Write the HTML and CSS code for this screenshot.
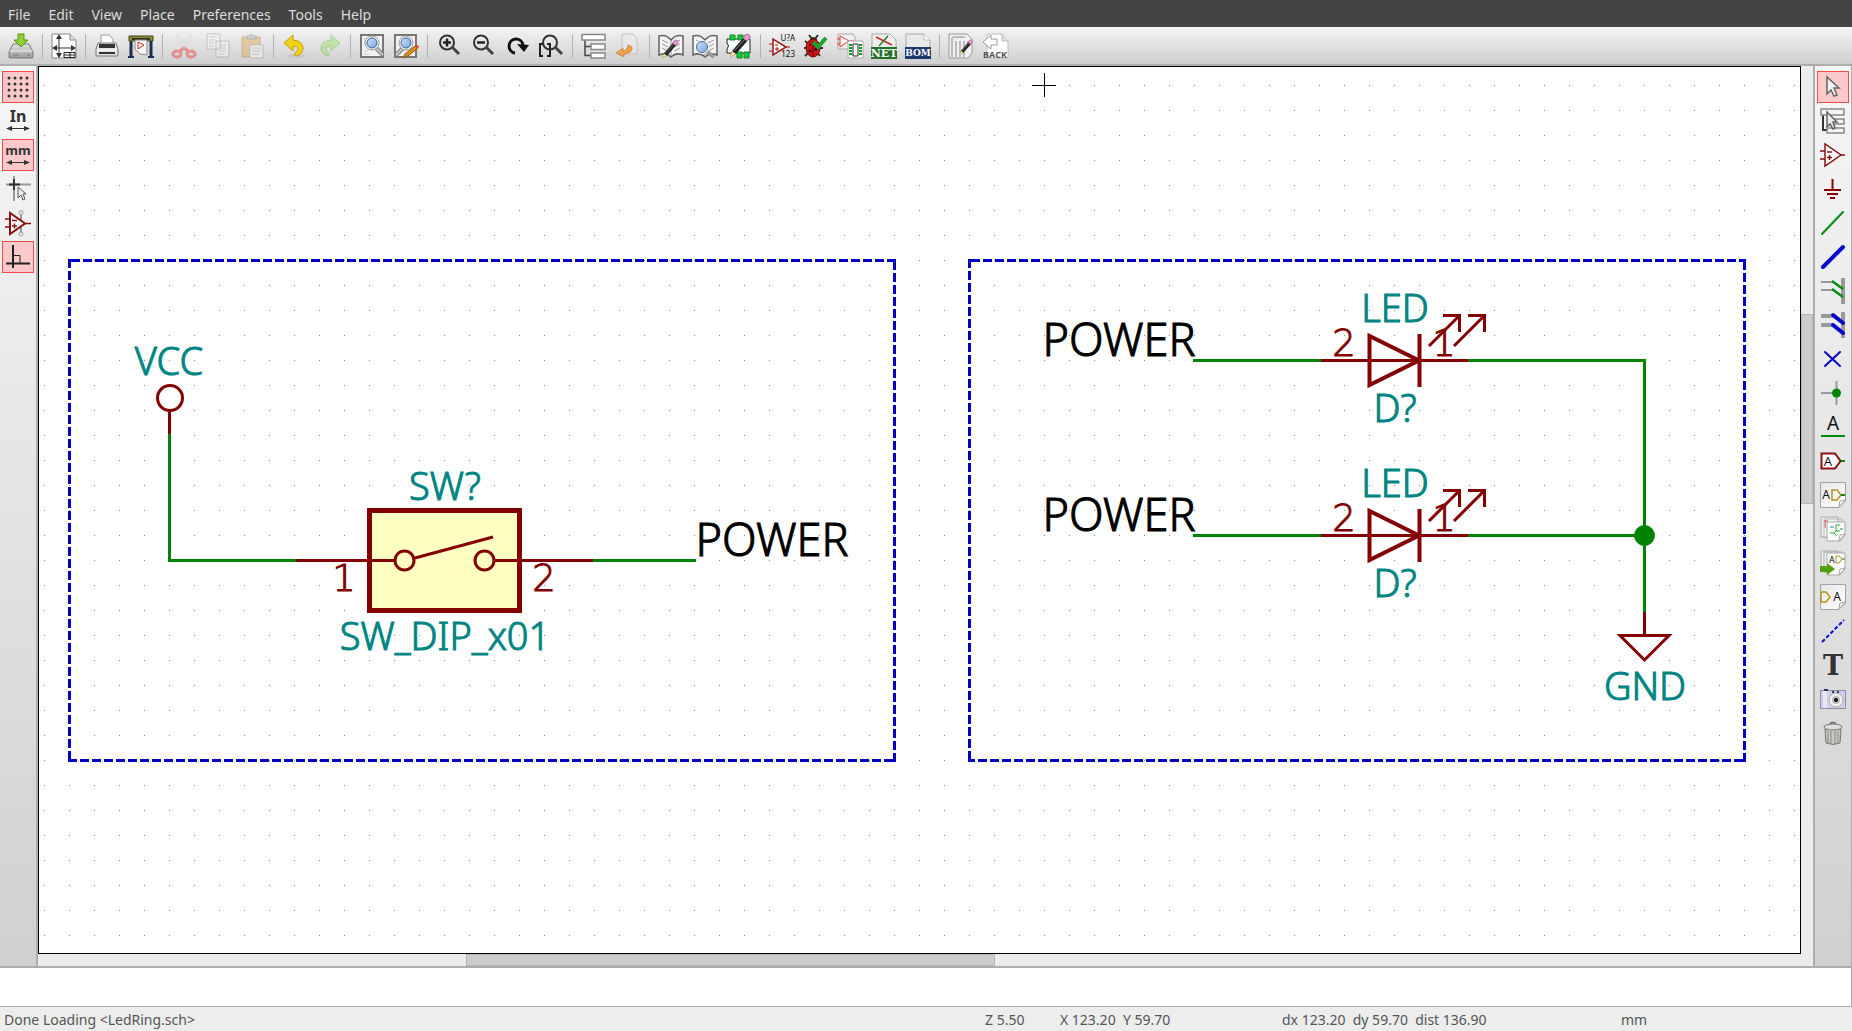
FILE: index.html
```html
<!DOCTYPE html>
<html lang="en">
<head>
<meta charset="utf-8">
<title>Eeschema - LedRing.sch</title>
<link rel="stylesheet" href="styles.css">
</head>
<body>
<svg class="defs" aria-hidden="true">
  <defs>
    <linearGradient id="sheet" x1="0" y1="0" x2="1" y2="1"><stop offset="0" stop-color="#e6e6e6"/><stop offset="1" stop-color="#fff"/></linearGradient>
    <linearGradient id="metal" x1="0" y1="0" x2="0" y2="1"><stop offset="0" stop-color="#e4e4e4"/><stop offset="1" stop-color="#9a9a9a"/></linearGradient>
    <linearGradient id="lens" x1="0" y1="0" x2="1" y2="1"><stop offset="0" stop-color="#d5e4f7"/><stop offset="1" stop-color="#6fa0dc"/></linearGradient>
    <g id="page"><path d="M.5 .5H25.500V19L19 25.500H.5Z" fill="url(#sheet)" stroke="#a3a3a3"/><path d="M25 18L19 25L20 19Z" fill="#fff" stroke="#a3a3a3"/></g>
    <g id="pencil"><path d="M4 24L6 18L19 3L23 6L10 21Z" fill="#222"/><path d="M8 18L20 5" stroke="#777"/><path d="M4 24L6 18L10 21Z" fill="#f2e08a"/><path d="M17 5L19 2Q22 0 24 3Q25 5 21 8Z" fill="#e79ad0" stroke="#a8669a"/></g>
    <g id="book"><path d="M1 3Q8 1 13 7Q18 1 25 3V22Q18 19 13 24Q8 19 1 22Z" fill="#f4f4f4" stroke="#666" stroke-width="1.500"/><path d="M13 7V23M4 7L10 10M4 11L10 14M4 15L10 18M16 10L22 7M16 14L22 11M16 18L22 15" stroke="#999" fill="none"/></g>
    <g id="diode">
      <path d="M1321 360.500H1468" stroke-width="3"/>
      <path d="M1369.500 336V385L1419 360.500Z" stroke-width="4"/>
      <path d="M1419.500 334V387" stroke-width="4"/>
      <path d="M1429 346L1459 316M1443 315.500H1461M1459.500 314V332M1454 346L1484 316M1468 315.500H1486M1484.500 314V332" stroke-width="3"/>
    </g>
  </defs>
</svg>

<nav class="menubar" aria-label="Menu">
  <button>File</button><button>Edit</button><button>View</button><button>Place</button><button>Preferences</button><button>Tools</button><button>Help</button>
</nav>

<div class="toolbar" role="toolbar" aria-label="Main">
  <button aria-label="Save"><svg viewBox="0 0 26 26"><path d="M5 11H21L25 19V24Q25 25 24 25H2Q1 25 1 24V19Z" fill="url(#metal)" stroke="#7a7a7a"/><path d="M2 18H24" stroke="#eee"/><path d="M5 22H11M19 22H22" stroke="#777"/><path d="M10 1H16V7H20L13 14L6 7H10Z" fill="#8fd03a" stroke="#4e9a06"/></svg></button>
  <span class="sep"></span>
  <button aria-label="Page settings"><svg viewBox="0 0 26 26"><path d="M1 1H19L25 7V25H1Z" fill="#fff" stroke="#888"/><path d="M19 1V7H25" fill="#ddd" stroke="#888"/><path d="M8 3V24M2 15H24" stroke="#333"/><path d="M8 1L5 6H11ZM8 25L5 20H11ZM1 15L6 12V18ZM25 15L20 12V18Z" fill="#333"/><path d="M13 19.500H24V24.500H13ZM13 22H24M19 20V24" fill="#fff" stroke="#222"/></svg></button>
  <span class="sep"></span>
  <button aria-label="Print"><svg viewBox="0 0 26 26"><path d="M7 11V2H15L19 6V11Z" fill="#fff" stroke="#999"/><path d="M4 10H22L24 16V22Q24 23 23 23H3Q2 23 2 22V16Z" fill="#e3e3e3" stroke="#777"/><path d="M5 11H21V15H5Z" fill="#333"/><path d="M3 17H23" stroke="#fff"/><path d="M5 20H21" stroke="#333" stroke-width="2"/></svg></button>
  <button aria-label="Plot"><svg viewBox="0 0 26 26"><path d="M3 8V25M23 8V25" stroke="#1c2f52" stroke-width="3"/><path d="M0 24H6M20 24H26" stroke="#1c2f52" stroke-width="2"/><path d="M1 3H25V8H1Z" fill="#8b8b3c" stroke="#45451c"/><path d="M4 6H22" stroke="#333318" stroke-width="2"/><path d="M7 7H19V22L12 21L7 16Z" fill="#f5f5f5" stroke="#888"/><path d="M10 9V16L16 12Z" fill="none" stroke="#b33"/></svg></button>
  <span class="sep"></span>
  <button class="off" aria-label="Cut" disabled><svg viewBox="0 0 26 26"><path d="M6 1L17 19M20 1L9 19" stroke="#aaa" stroke-width="3"/><path d="M6 1L17 19M20 1L9 19" stroke="#eee" stroke-width="2"/><g fill="none" stroke="#e22" stroke-width="3"><ellipse cx="6" cy="21" rx="4" ry="3"/><ellipse cx="20" cy="21" rx="4" ry="3"/><path d="M9 18L13 15L17 18"/></g></svg></button>
  <button class="off" aria-label="Copy" disabled><svg viewBox="0 0 26 26"><path d="M2 1H15V16H2ZM11 8H24V24H11Z" fill="#fff" stroke="#888"/><path d="M4 4H12M4 7H10M4 10H9M4 13H9M14 12H21M14 15H21M14 18H21M14 21H19" stroke="#999"/></svg></button>
  <button class="off" aria-label="Paste" disabled><svg viewBox="0 0 26 26"><path d="M3 4H21V24H3Z" fill="#e0a040" stroke="#a06a20"/><path d="M8 6V3H10Q12-1 14 3H17V6Z" fill="#aaa" stroke="#666"/><path d="M11 12H24V25H11Z" fill="#fff" stroke="#888"/><path d="M13 15H22M13 18H22M13 21H20" stroke="#888"/></svg></button>
  <span class="sep"></span>
  <button aria-label="Undo"><svg viewBox="0 0 26 26"><ellipse cx="14" cy="23" rx="9" ry="2" fill="#c8c8c8"/><path d="M2 10L11 2V7Q21 8 21 15Q21 21 14 23Q12 23 13 20Q17 18 16 15Q15 13 11 13V18Z" fill="#f3d21c" stroke="#c4a000"/></svg></button>
  <button class="off" aria-label="Redo" disabled><svg viewBox="0 0 26 26"><path d="M24 10L15 2V7Q5 8 5 15Q5 21 12 23Q14 23 13 20Q9 18 10 15Q11 13 15 13V18Z" fill="#8ae255" stroke="#5cae2c"/></svg></button>
  <span class="sep"></span>
  <button aria-label="Find"><svg viewBox="0 0 26 26"><path d="M2 2H24V24H2Z" fill="#f2f2f2" stroke="#777" stroke-width="2"/><path d="M5 18H9M5 21H10M4 6H7" stroke="#ccc"/><path d="M17 15L24 22" stroke="#777" stroke-width="4"/><path d="M17 15L24 22" stroke="#ccc" stroke-width="2"/><circle cx="13" cy="10" r="7" fill="#f5f5f5" stroke="#999"/><circle cx="13" cy="10" r="5" fill="url(#lens)" stroke="#3465a4"/></svg></button>
  <button aria-label="Find and replace"><svg viewBox="0 0 26 26"><path d="M2 2H23V24H2Z" fill="#f2f2f2" stroke="#777" stroke-width="2"/><path d="M10 15L3 22" stroke="#777" stroke-width="4"/><path d="M10 15L3 22" stroke="#ccc" stroke-width="2"/><circle cx="13" cy="10" r="7" fill="#f5f5f5" stroke="#999"/><circle cx="13" cy="10" r="5" fill="url(#lens)" stroke="#3465a4"/><path d="M10 25L12 21L22 13L25 15L15 23Z" fill="#e08a1e" stroke="#8f5902"/><path d="M22 13L25 15L26 13L24 12Z" fill="#e33"/></svg></button>
  <span class="sep"></span>
  <button aria-label="Zoom in"><svg viewBox="0 0 26 26"><circle cx="11" cy="9.500" r="7" fill="none" stroke="#333" stroke-width="2"/><path d="M16 14L23 21" stroke="#444" stroke-width="3"/><path d="M7 9.500H15M11 5.500V13.500" stroke="#222" stroke-width="2.500"/></svg></button>
  <button aria-label="Zoom out"><svg viewBox="0 0 26 26"><circle cx="11" cy="9.500" r="7" fill="none" stroke="#333" stroke-width="2"/><path d="M16 14L23 21" stroke="#444" stroke-width="3"/><path d="M7 9.500H15" stroke="#222" stroke-width="2.500"/></svg></button>
  <button aria-label="Redraw view"><svg viewBox="0 0 26 26"><path d="M11 20A7 7 0 1 1 19 12" fill="none" stroke="#111" stroke-width="3"/><path d="M13 11L25 12L20 19Z" fill="#111"/></svg></button>
  <button aria-label="Zoom to fit"><svg viewBox="0 0 26 26"><circle cx="12" cy="9.500" r="7" fill="none" stroke="#333" stroke-width="2"/><path d="M17 14L24 21" stroke="#444" stroke-width="3"/><path d="M5 11H2V23H5M9 11H12V23H9" fill="none" stroke="#222" stroke-width="2"/></svg></button>
  <span class="sep"></span>
  <button aria-label="Hierarchy navigator"><svg viewBox="0 0 26 26"><path d="M4 7V22.500H10M4 13.500H10" fill="none" stroke="#444" stroke-width="1.500"/><path d="M1 1.500H24V7H1ZM10 11H24V16.500H10ZM10 20H24V25H10Z" fill="#fff" stroke="#888" stroke-width="1.500"/></svg></button>
  <button class="dim" aria-label="Leave sheet" disabled><svg viewBox="0 0 26 26"><path d="M7 1H18L22 5V21H7Z" fill="#e9e9e9" stroke="#b5b5b5"/><path d="M17 14Q18 20 9 21V24L1 20L8 15V18Q13 17 13 12Z" fill="#f58a14" stroke="#ce6a00"/></svg></button>
  <span class="sep"></span>
  <button aria-label="Library editor"><svg viewBox="0 0 26 26"><use href="#book"/><g transform="translate(1 6) scale(.8)"><use href="#pencil"/></g></svg></button>
  <button aria-label="Library browser"><svg viewBox="0 0 26 26"><use href="#book"/><path d="M14 18L22 24" stroke="#999" stroke-width="4"/><circle cx="10" cy="14" r="6" fill="url(#lens)" stroke="#f4f4f4" stroke-width="2"/><circle cx="10" cy="14" r="5.500" fill="none" stroke="#3465a4"/></svg></button>
  <button aria-label="Footprint editor"><svg viewBox="0 0 26 26"><path d="M1 6H24V20H1V16Q4 13 1 10Z" fill="#fff" stroke="#222"/><path d="M4 2H9V7H4ZM12 2H17V7H12ZM11 19H16V25H11ZM18 19H23V25H18Z" fill="#12c93a" stroke="#0a8a22"/><use href="#pencil"/></svg></button>
  <span class="sep"></span>
  <button aria-label="Annotate schematic"><svg viewBox="0 0 26 26"><path d="M4 6V22L17 14Z" fill="#fff" stroke="#a01818" stroke-width="1.500"/><path d="M0 11H4M0 18H4M17 14H21M6 12H9M6 16H10M8 14V18" stroke="#a01818"/><text x="26" y="8" class="t8">U?A</text><text x="26" y="24" class="t8">123</text></svg></button>
  <button aria-label="Electrical rules check"><svg viewBox="0 0 26 26"><path d="M6 2L9 6M15 2L12 6M2 8L6 11M1 15H5M2 23L6 19M17 23L14 19M16 15H20" stroke="#333" stroke-width="2"/><path d="M7 6Q10 2 14 6V9H7Z" fill="#333"/><ellipse cx="10" cy="15" rx="7" ry="9" fill="#cf1414" stroke="#700"/><path d="M10 8V23" stroke="#500"/><circle cx="7" cy="12" r="1" fill="#200"/><circle cx="13" cy="16" r="1.500" fill="#200"/><circle cx="7" cy="18" r="1.500" fill="#200"/><path d="M10 9L15 14L23 5" fill="none" stroke="#18a030" stroke-width="4"/></svg></button>
  <button aria-label="Assign footprints"><svg viewBox="0 0 26 26"><path d="M1 1H16L18 4V16H1Z" fill="#eee" stroke="#aaa"/><path d="M3 3V14L12 8ZM0 6H3M0 11H3M12 8H17" fill="#fff" stroke="#d33"/><path d="M11 8H26V25H11Z" fill="#fff" stroke="#aaa"/><path d="M16 11H21V23H16Z" fill="#fff" stroke="#222"/><path d="M13.500 11V23M23.500 11V23" stroke="#0a9a20" stroke-width="3" stroke-dasharray="2 1"/></svg></button>
  <button aria-label="Generate netlist"><svg viewBox="0 0 26 26"><path d="M1 1H19L25 7V25H1Z" fill="#eee" stroke="#aaa"/><path d="M5 4L21 12" stroke="#c22" stroke-width="1.500"/><path d="M17 3L8 13" stroke="#2a7a2a" stroke-width="1.500"/><path d="M0 14H26V26H0Z" fill="#24702a"/><text x="13" y="24" class="bar">NET</text></svg></button>
  <button aria-label="Generate bill of materials"><svg viewBox="0 0 26 26"><path d="M1 1H19L25 7V25H1Z" fill="#e9ebe9" stroke="#aaa"/><path d="M19 1V7H25" fill="#fff" stroke="#bbb"/><path d="M0 14H26V26H0Z" fill="#20386c"/><text x="13" y="23" class="bar bom">BOM</text></svg></button>
  <span class="sep"></span>
  <button aria-label="Run Pcbnew"><svg viewBox="0 0 26 26"><path d="M1 1H19L24 6V20L20 25H1Z" fill="#f1f1f1" stroke="#999"/><path d="M4 24V6Q4 4 7 4H17M8 24V8M12 24V8M16 24V8M20 8V12" fill="none" stroke="#bbb" stroke-width="2"/><g transform="translate(9 6) scale(.65)"><use href="#pencil"/></g></svg></button>
  <button aria-label="Import footprint associations"><svg viewBox="0 0 26 26"><path d="M5 1H20L26 8V25H5Z" fill="#fff" stroke="#bbb"/><path d="M20 1V8H26" fill="#ddd" stroke="#bbb"/><path d="M1 9L9 2V6H15V12H9V16Z" fill="#fff" stroke="#999"/><text x="13" y="25" class="back">BACK</text></svg></button>
</div>

<main class="work">
  <div class="side left" role="toolbar" aria-label="Options">
    <button class="on" aria-label="Show grid"><svg viewBox="0 0 26 26"><path d="M4 4H24M4 10H24M4 16H24M4 22H24" stroke="#333" stroke-width="3" stroke-linecap="round" stroke-dasharray="0 6"/></svg></button>
    <button aria-label="Inches"><svg viewBox="0 0 26 26"><text x="13" y="14" class="unit">In</text><path d="M4 20.500H22" stroke="#333"/><path d="M1 20.500L7 18V23ZM25 20.500L19 18V23Z" fill="#333"/></svg></button>
    <button class="on" aria-label="Millimeters"><svg viewBox="0 0 26 26"><text x="13" y="13" class="unit mm">mm</text><path d="M4 20.500H22" stroke="#333"/><path d="M1 20.500L7 18V23ZM25 20.500L19 18V23Z" fill="#333"/></svg></button>
    <button aria-label="Cursor shape"><svg viewBox="0 0 26 26"><path d="M9 0V25M1 8.500H26" stroke="#999" stroke-width="2" /><path d="M9 3V14M4 8.500H15" stroke="#333" stroke-width="2"/><path d="M13 11V22L16 19L18 24L20 23L18 18H21Z" fill="#eee" stroke="#555"/></svg></button>
    <button aria-label="Show hidden pins"><svg viewBox="0 0 26 26"><path d="M16 3V24" stroke="#999" stroke-width="2"/><circle cx="16" cy="2.500" r="2" fill="#eee" stroke="#999"/><circle cx="16" cy="24" r="2" fill="#eee" stroke="#999"/><path d="M5 3V24L20 13.500Z" fill="#fff" stroke="#8b1111" stroke-width="2"/><path d="M0 9H5M0 17H5M20 13.500H26M7 10.500H12M7 16H12M9.500 13.500V18.500" stroke="#8b1111" stroke-width="1.500"/></svg></button>
    <button class="on" aria-label="Force H/V wires"><svg viewBox="0 0 26 26"><path d="M8 1V24M1 19.500H25" stroke="#222" stroke-width="2"/><path d="M8 11.500H15V19" fill="none" stroke="#222"/></svg></button>
  </div>

  <div class="view">
    <div class="canvas">
      <svg class="schematic" role="img" aria-label="LedRing schematic">
        <defs><pattern id="grid" width="25" height="25" patternUnits="userSpaceOnUse"><rect x="5" y="18" width="1" height="1" fill="#848484"/></pattern></defs>
        <rect width="100%" height="100%" fill="url(#grid)" shape-rendering="crispEdges"/>
        <g transform="translate(-39 -67)" fill="none">
          <g class="outline">
            <path d="M69.500 259V762"/><path d="M68 260.500H71"/><path d="M71 260.500H896"/><path d="M894.500 762V259"/><path d="M896 760.500H893"/><path d="M893 760.500H68"/>
            <path d="M969.500 259V762"/><path d="M968 260.500H971"/><path d="M971 260.500H1746"/><path d="M1744.500 762V259"/><path d="M1746 760.500H1743"/><path d="M1743 760.500H968"/>
          </g>
          <g class="wire">
            <path d="M169.500 434V560.500H296M593 560.500H696M1193 360.500H1321M1468 360.500H1644.500V612M1193 535.500H1321M1468 535.500H1644.500"/>
            <circle cx="1644.500" cy="535.500" r="10" fill="#008400" stroke-width="1"/>
          </g>
          <g class="part">
            <circle cx="170" cy="398" r="12.500"/><path d="M169.500 411V434"/>
            <rect x="369.500" y="510.500" width="150" height="100" fill="#ffffc2" stroke-width="5"/>
            <path d="M296 560.500H395M494 560.500H593"/><circle cx="404.500" cy="560.500" r="9.500"/><circle cx="484.500" cy="560.500" r="9.500"/><path d="M415 558L493 537"/>
            <use href="#diode"/><use href="#diode" y="175"/>
            <path d="M1644.500 612V635.500M1620 635.500H1669L1644.500 660Z"/>
          </g>
          <g class="field">
            <text x="169" y="375">VCC</text><text x="445" y="500">SW?</text><text x="445" y="650">SW_DIP_x01</text>
            <text x="1395" y="322">LED</text><text x="1395" y="422">D?</text><text x="1395" y="497">LED</text><text x="1395" y="597">D?</text><text x="1645" y="700">GND</text>
          </g>
          <g class="pin">
            <text x="344" y="591">1</text><text x="544" y="591">2</text><text x="1344" y="356">2</text><text x="1444" y="356">1</text><text x="1344" y="531">2</text><text x="1444" y="531">1</text>
          </g>
          <g class="net"><text x="772" y="556">POWER</text><text x="1119" y="356">POWER</text><text x="1119" y="531">POWER</text></g>
          <path d="M1032 85.500H1056M1044.500 73V97" stroke="#000"/>
        </g>
      </svg>
    </div>
    <div class="vscroll"><div class="thumb"></div></div>
    <div class="hscroll"><div class="thumb"></div></div>
  </div>

  <div class="side right" role="toolbar" aria-label="Place">
    <button class="on" aria-label="Select"><svg viewBox="0 0 26 26"><path d="M7 3V20L11 16L14 22L17 21L14 14H19Z" fill="#f2f2f2" stroke="#666" stroke-width="1.500"/></svg></button>
    <button aria-label="Enter sheet"><svg viewBox="0 0 26 26"><path d="M3 7V22H8" fill="none" stroke="#333" stroke-width="2"/><path d="M1 1H24V7H1ZM10 11H24V16H10ZM7 20H24V25H7Z" fill="#f5f5f5" stroke="#888" stroke-width="1.500"/><path d="M7 4V19L10 16L13 21L15 20L13 14H17Z" fill="#eee" stroke="#666" stroke-width="1.500"/></svg></button>
    <button aria-label="Place component"><svg viewBox="0 0 26 26"><path d="M5 2V24L21 13Z" fill="#fff" stroke="#8b1111" stroke-width="1.500"/><path d="M0 9H5M0 17H5M21 13H25M7 10H12M7 15.500H12M9.500 13V18" stroke="#8b1111" stroke-width="1.500"/></svg></button>
    <button aria-label="Place power port"><svg viewBox="0 0 26 26"><path d="M12.500 3V14M4 14H21M7 18H18M10 22H15" stroke="#840000" stroke-width="2"/></svg></button>
    <button aria-label="Place wire"><svg viewBox="0 0 26 26"><path d="M2 24L23 2" stroke="#008e10" stroke-width="2" stroke-linecap="round"/></svg></button>
    <button aria-label="Place bus"><svg viewBox="0 0 26 26"><path d="M3 23L23 3" stroke="#0606c8" stroke-width="4" stroke-linecap="round"/></svg></button>
    <button aria-label="Wire to bus entry"><svg viewBox="0 0 26 26"><path d="M1 4H13M1 12H13" stroke="#999" stroke-width="2"/><path d="M23 0V26" stroke="#999" stroke-width="4"/><path d="M12 3L23 11M12 11L23 19" stroke="#008e10" stroke-width="2.500"/></svg></button>
    <button aria-label="Bus to bus entry"><svg viewBox="0 0 26 26"><path d="M1 4H13M1 13H13M23 0V26" stroke="#999" stroke-width="4"/><path d="M13 3L23 11M13 13L23 21" stroke="#0606c8" stroke-width="4" stroke-linecap="round"/></svg></button>
    <button aria-label="No connect"><svg viewBox="0 0 26 26"><path d="M5 6L20 20M20 6L5 20" stroke="#0606c8" stroke-width="2" stroke-linecap="round"/></svg></button>
    <button aria-label="Junction"><svg viewBox="0 0 26 26"><path d="M1 13H16M16.500 1V25" stroke="#999" stroke-width="2"/><circle cx="16.500" cy="13" r="4.500" fill="#008400"/></svg></button>
    <button aria-label="Net label"><svg viewBox="0 0 26 26"><text x="13" y="16" class="label-a">A</text><path d="M1 22H25" stroke="#008e10" stroke-width="2"/></svg></button>
    <button aria-label="Global label"><svg viewBox="0 0 26 26"><path d="M1.500 5.500H15L20.500 13L15 20.500H1.500Z" fill="#fff" stroke="#8b1111" stroke-width="2"/><path d="M21 13H25" stroke="#008e10" stroke-width="2"/><text x="8" y="18" class="t13">A</text></svg></button>
    <button aria-label="Hierarchical label"><svg viewBox="0 0 26 26"><use href="#page"/><text x="6" y="17" class="t12">A</text><path d="M12 8H17L21 13L17 18H12Z" fill="none" stroke="#b8921a" stroke-width="1.500"/><path d="M21 13H25" stroke="#008e10" stroke-width="2"/></svg></button>
    <button aria-label="Hierarchical sheet"><svg viewBox="0 0 26 26"><path d="M1 1H18V21H1Z" fill="#f0f0f0" stroke="#aaa"/><path d="M5 4V12M4 5H8" stroke="#c44"/><path d="M4 3H22V22H4Z" fill="none" stroke="#bbb"/><path d="M7 6H25V19L20 25H7Z" fill="#fafafa" stroke="#aaa"/><path d="M25 18L19 25L20 19Z" fill="#fff" stroke="#aaa"/><path d="M16 9H20M16 9V15H20M14 17H10M14 17L17 20M14 17L17 14" fill="none" stroke="#3a4"/><path d="M10 11H14M20 13H23" stroke="#38a" stroke-width="1"/></svg></button>
    <button aria-label="Import hierarchical label"><svg viewBox="0 0 26 26"><path d="M1 1H18V21H1ZM4 2H22V22H4Z" fill="#f0f0f0" stroke="#aaa"/><path d="M7 3H25V19L20 25H7Z" fill="#fafafa" stroke="#aaa"/><path d="M25 18L19 25L20 19Z" fill="#fff" stroke="#aaa"/><text x="12" y="13" class="t9">A</text><path d="M16 6H19L22 9L19 13H16Z" fill="none" stroke="#b8921a"/><path d="M22 9H25" stroke="#008e10"/><path d="M0 16H7V13L15 19L7 25V22H0Z" fill="#55a00d"/></svg></button>
    <button aria-label="Sheet pin"><svg viewBox="0 0 26 26"><use href="#page"/><path d="M1 8H6L10 13L6 18H1Z" fill="none" stroke="#b8921a" stroke-width="1.500"/><text x="17" y="17" class="t12">A</text></svg></button>
    <button aria-label="Graphic line"><svg viewBox="0 0 26 26"><path d="M2 24L24 2" stroke="#1010d8" stroke-width="2" stroke-dasharray="4 2"/></svg></button>
    <button aria-label="Text"><svg viewBox="0 0 26 26"><text x="13" y="23" class="serif-t">T</text></svg></button>
    <button aria-label="Image"><svg viewBox="0 0 26 26"><path d="M.5 4.500H25.500V22.500H.5Z" fill="#cfcfeb" stroke="#8c8cae"/><path d="M5 5V22" stroke="#e8e8f6" stroke-width="4"/><path d="M4 4H8M12 6H14M17 6H19" stroke="#335" stroke-width="2"/><circle cx="16" cy="14" r="7" fill="#f2f2f2" stroke="#aaa"/><circle cx="16" cy="14" r="4" fill="#bbb"/><circle cx="16" cy="14" r="2" fill="#111"/></svg></button>
    <button aria-label="Delete"><svg viewBox="0 0 26 26"><path d="M5 9H21L20 23Q13 26 6 23Z" fill="#c8c8c0" stroke="#777"/><path d="M8 11V23M11 11V24M15 11V24M18 11V23" stroke="#888" stroke-width="1"/><ellipse cx="13" cy="7" rx="9" ry="3" fill="#dededa" stroke="#777"/><path d="M10 4Q13 1 16 4" fill="none" stroke="#777" stroke-width="2"/></svg></button>
  </div>
</main>

<div class="messages"></div>

<footer class="status">
  <span>Done Loading &lt;LedRing.sch&gt;</span><span>Z 5.50</span><span>X 123.20&nbsp; Y 59.70</span><span>dx 123.20&nbsp; dy 59.70&nbsp; dist 136.90</span><span>mm</span>
</footer>
</body>
</html>
```
FILE: styles.css
```css
* { box-sizing: border-box; }

body {
  margin: 0;
  height: 100vh;
  display: flex;
  flex-direction: column;
  overflow: hidden;
  background: #ededed;
  color: #555;
  font: 14px/20px "Noto Sans", sans-serif;
}

button {
  margin: 0;
  padding: 0;
  border: 0;
  background: none;
  color: inherit;
  font: inherit;
}

.defs { position: absolute; width: 0; height: 0; }

.menubar {
  flex: none;
  display: flex;
  align-items: center;
  gap: 18px;
  height: 27px;
  padding: 2px 8px 0;
  background: #444;
  color: #dcdcdc;
}

/* Main toolbar */
.toolbar {
  flex: none;
  display: flex;
  align-items: center;
  height: 39px;
  padding: 1px 4px 0;
  background: linear-gradient(#f4f4f4, #cfcfcf);
  border-bottom: 2px solid #adadad;
}
.toolbar button {
  display: flex;
  justify-content: center;
  width: 34px;
}
.toolbar svg,
.side svg {
  display: block;
  width: 26px;
  height: 26px;
  overflow: visible;
}
.sep {
  width: 1px;
  height: 24px;
  margin: 0 4px;
  background: #b4b4b4;
}
.off { opacity: .4; }
.dim { opacity: .7; }

/* Work area */
.work {
  flex: 1;
  min-height: 0;
  display: flex;
}
.side {
  flex: none;
  display: flex;
  flex-direction: column;
  gap: 2px;
  padding: 5px 2px 0;
  background: linear-gradient(#f6f6f6, #d0d0d0);
}
.left { border-right: 2px solid #adadad; }
.right {
  border-left: 2px solid #adadad;
  border-right: 1px solid #adadad;
}
.side button {
  display: flex;
  align-items: center;
  justify-content: center;
  width: 32px;
  height: 32px;
}
.side .on {
  background: #fbc9c9;
  border: 1px solid #ee4c4c;
}

.view {
  flex: 1;
  min-width: 0;
  display: grid;
  grid-template: minmax(0, 1fr) 12px / minmax(0, 1fr) 12px;
  background: #ececec;
}
.canvas {
  background: #fff;
  border: 1px solid #000;
}
.schematic {
  display: block;
  width: 100%;
  height: 100%;
}
.vscroll {
  display: grid;
  grid-template-rows: 248fr 190fr 450fr;
}
.hscroll {
  display: grid;
  grid-template-columns: 428fr 529fr 806fr;
}
.thumb {
  background: #cdcdcd;
  border: 1px solid #b4b4b4;
}
.vscroll .thumb { grid-row: 2; }
.hscroll .thumb { grid-column: 2; }

/* Schematic layers */
.outline { stroke: #0000c2; stroke-width: 3; stroke-dasharray: 9 3; }
.wire { stroke: #008400; stroke-width: 3; }
.part { stroke: #840000; stroke-width: 3; }
.field, .pin, .net {
  text-anchor: middle;
  stroke-width: 1;
  font-weight: 300;
}
.field { fill: #008484; stroke: #008484; font-size: 38px; }
.pin {
  fill: #840000;
  stroke: #840000;
  font: 200 37px "DejaVu Sans", sans-serif;
}
.net { fill: #000; stroke: #000; font-size: 45px; }

/* Lettering inside icons */
.t8 { font-size: 8px; fill: #111; text-anchor: end; }
.t9, .t12, .t13, .label-a { text-anchor: middle; fill: #111; }
.t9 { font-size: 9px; }
.t12 { font-size: 12px; }
.t13 { font-size: 13px; }
.label-a { font-size: 19px; }
.bar { font: bold 11px "DejaVu Serif", serif; fill: #fff; text-anchor: middle; }
.bom { font-size: 9px; }
.back { font-size: 9px; font-weight: bold; fill: #555; text-anchor: middle; }
.unit { font-size: 16px; font-weight: bold; fill: #333; text-anchor: middle; }
.mm { font-size: 13px; }
.serif-t { font: bold 27px "DejaVu Serif", serif; fill: #333; text-anchor: middle; }

.messages {
  flex: none;
  height: 41px;
  background: #fff;
  border: solid #adadad;
  border-width: 2px 1px 1px 0;
}
.status {
  flex: none;
  display: grid;
  grid-template-columns: 1fr 75px 222px 339px 231px;
  height: 24px;
  padding: 3px 0 0 4px;
  white-space: nowrap;
}
```
